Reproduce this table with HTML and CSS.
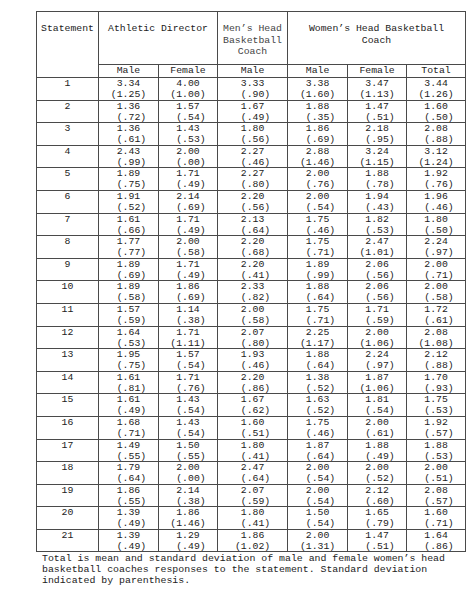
FILE: index.html
```html
<!DOCTYPE html>
<html>
<head>
<meta charset="utf-8">
<link rel="stylesheet" href="styles.css">
</head>
<body>
<div class="page">
<table class="stats">
<colgroup>
<col class="c-st"><col class="c-60"><col class="c-59"><col class="c-70"><col class="c-60"><col class="c-59"><col class="c-59">
</colgroup>
<thead>
<tr class="head">
<th rowspan="2" class="st-head">Statement</th>
<th colspan="2">Athletic Director</th>
<th class="mens">Men’s Head Basketball Coach</th>
<th colspan="3">Women’s Head Basketball<br>Coach</th>
</tr>
<tr class="sub">
<th>Male</th><th>Female</th><th>Male</th><th>Male</th><th>Female</th><th>Total</th>
</tr>
</thead>
<tbody>
<tr><td>1</td><td>3.34<span class="sd">(1.25)</span></td><td>4.00<span class="sd">(1.00)</span></td><td>3.33<span class="sd"> (.90)</span></td><td>3.38<span class="sd">(1.60)</span></td><td>3.47<span class="sd">(1.13)</span></td><td>3.44<span class="sd">(1.26)</span></td></tr>
<tr><td>2</td><td>1.36<span class="sd"> (.72)</span></td><td>1.57<span class="sd"> (.54)</span></td><td>1.67<span class="sd"> (.49)</span></td><td>1.88<span class="sd"> (.35)</span></td><td>1.47<span class="sd"> (.51)</span></td><td>1.60<span class="sd"> (.50)</span></td></tr>
<tr><td>3</td><td>1.36<span class="sd"> (.61)</span></td><td>1.43<span class="sd"> (.53)</span></td><td>1.80<span class="sd"> (.56)</span></td><td>1.86<span class="sd"> (.69)</span></td><td>2.18<span class="sd"> (.95)</span></td><td>2.08<span class="sd"> (.88)</span></td></tr>
<tr><td>4</td><td>2.43<span class="sd"> (.99)</span></td><td>2.00<span class="sd"> (.00)</span></td><td>2.27<span class="sd"> (.46)</span></td><td>2.88<span class="sd">(1.46)</span></td><td>3.24<span class="sd">(1.15)</span></td><td>3.12<span class="sd">(1.24)</span></td></tr>
<tr><td>5</td><td>1.89<span class="sd"> (.75)</span></td><td>1.71<span class="sd"> (.49)</span></td><td>2.27<span class="sd"> (.80)</span></td><td>2.00<span class="sd"> (.76)</span></td><td>1.88<span class="sd"> (.78)</span></td><td>1.92<span class="sd"> (.76)</span></td></tr>
<tr><td>6</td><td>1.91<span class="sd"> (.52)</span></td><td>2.14<span class="sd"> (.69)</span></td><td>2.20<span class="sd"> (.56)</span></td><td>2.00<span class="sd"> (.54)</span></td><td>1.94<span class="sd"> (.43)</span></td><td>1.96<span class="sd"> (.46)</span></td></tr>
<tr><td>7</td><td>1.61<span class="sd"> (.66)</span></td><td>1.71<span class="sd"> (.49)</span></td><td>2.13<span class="sd"> (.64)</span></td><td>1.75<span class="sd"> (.46)</span></td><td>1.82<span class="sd"> (.53)</span></td><td>1.80<span class="sd"> (.50)</span></td></tr>
<tr><td>8</td><td>1.77<span class="sd"> (.77)</span></td><td>2.00<span class="sd"> (.58)</span></td><td>2.20<span class="sd"> (.68)</span></td><td>1.75<span class="sd"> (.71)</span></td><td>2.47<span class="sd">(1.01)</span></td><td>2.24<span class="sd"> (.97)</span></td></tr>
<tr><td>9</td><td>1.89<span class="sd"> (.69)</span></td><td>1.71<span class="sd"> (.49)</span></td><td>2.20<span class="sd"> (.41)</span></td><td>1.89<span class="sd"> (.99)</span></td><td>2.06<span class="sd"> (.56)</span></td><td>2.00<span class="sd"> (.71)</span></td></tr>
<tr><td>10</td><td>1.89<span class="sd"> (.58)</span></td><td>1.86<span class="sd"> (.69)</span></td><td>2.33<span class="sd"> (.82)</span></td><td>1.88<span class="sd"> (.64)</span></td><td>2.06<span class="sd"> (.56)</span></td><td>2.00<span class="sd"> (.58)</span></td></tr>
<tr><td>11</td><td>1.57<span class="sd"> (.59)</span></td><td>1.14<span class="sd"> (.38)</span></td><td>2.00<span class="sd"> (.58)</span></td><td>1.75<span class="sd"> (.71)</span></td><td>1.71<span class="sd"> (.59)</span></td><td>1.72<span class="sd"> (.61)</span></td></tr>
<tr><td>12</td><td>1.64<span class="sd"> (.53)</span></td><td>1.71<span class="sd">(1.11)</span></td><td>2.07<span class="sd"> (.80)</span></td><td>2.25<span class="sd">(1.17)</span></td><td>2.00<span class="sd">(1.06)</span></td><td>2.08<span class="sd">(1.08)</span></td></tr>
<tr><td>13</td><td>1.95<span class="sd"> (.75)</span></td><td>1.57<span class="sd"> (.54)</span></td><td>1.93<span class="sd"> (.46)</span></td><td>1.88<span class="sd"> (.64)</span></td><td>2.24<span class="sd"> (.97)</span></td><td>2.12<span class="sd"> (.88)</span></td></tr>
<tr><td>14</td><td>1.61<span class="sd"> (.81)</span></td><td>1.71<span class="sd"> (.76)</span></td><td>2.20<span class="sd"> (.86)</span></td><td>1.38<span class="sd"> (.52)</span></td><td>1.87<span class="sd">(1.06)</span></td><td>1.70<span class="sd"> (.93)</span></td></tr>
<tr><td>15</td><td>1.61<span class="sd"> (.49)</span></td><td>1.43<span class="sd"> (.54)</span></td><td>1.67<span class="sd"> (.62)</span></td><td>1.63<span class="sd"> (.52)</span></td><td>1.81<span class="sd"> (.54)</span></td><td>1.75<span class="sd"> (.53)</span></td></tr>
<tr><td>16</td><td>1.68<span class="sd"> (.71)</span></td><td>1.43<span class="sd"> (.54)</span></td><td>1.60<span class="sd"> (.51)</span></td><td>1.75<span class="sd"> (.46)</span></td><td>2.00<span class="sd"> (.61)</span></td><td>1.92<span class="sd"> (.57)</span></td></tr>
<tr><td>17</td><td>1.49<span class="sd"> (.55)</span></td><td>1.50<span class="sd"> (.55)</span></td><td>1.80<span class="sd"> (.41)</span></td><td>1.87<span class="sd"> (.64)</span></td><td>1.88<span class="sd"> (.49)</span></td><td>1.88<span class="sd"> (.53)</span></td></tr>
<tr><td>18</td><td>1.79<span class="sd"> (.64)</span></td><td>2.00<span class="sd"> (.00)</span></td><td>2.47<span class="sd"> (.64)</span></td><td>2.00<span class="sd"> (.54)</span></td><td>2.00<span class="sd"> (.52)</span></td><td>2.00<span class="sd"> (.51)</span></td></tr>
<tr><td>19</td><td>1.86<span class="sd"> (.55)</span></td><td>2.14<span class="sd"> (.38)</span></td><td>2.07<span class="sd"> (.59)</span></td><td>2.00<span class="sd"> (.54)</span></td><td>2.12<span class="sd"> (.60)</span></td><td>2.08<span class="sd"> (.57)</span></td></tr>
<tr><td>20</td><td>1.39<span class="sd"> (.49)</span></td><td>1.86<span class="sd">(1.46)</span></td><td>1.80<span class="sd"> (.41)</span></td><td>1.50<span class="sd"> (.54)</span></td><td>1.65<span class="sd"> (.79)</span></td><td>1.60<span class="sd"> (.71)</span></td></tr>
<tr><td>21</td><td>1.39<span class="sd"> (.49)</span></td><td>1.29<span class="sd"> (.49)</span></td><td>1.86<span class="sd">(1.02)</span></td><td>2.00<span class="sd">(1.31)</span></td><td>1.47<span class="sd"> (.51)</span></td><td>1.64<span class="sd"> (.86)</span></td></tr>
</tbody>
</table>
<p class="note">Total is mean and standard deviation of male and female women’s head<br>basketball coaches responses to the statement. Standard deviation<br>indicated by parenthesis.</p>
</div>
</body>
</html>
```
FILE: styles.css
```css
html, body {
  margin: 0;
  padding: 0;
  background: #ffffff;
}
.page {
  padding: 11px 0 0 36px;
  font-family: "Liberation Mono", "DejaVu Sans Mono", monospace;
  font-size: 9.8px;
  color: #222222;
}
.stats {
  border-collapse: collapse;
  table-layout: fixed;
  width: 430px;
}
.c-st { width: 62px; }
.c-60 { width: 60px; }
.c-59 { width: 59px; }
.c-70 { width: 70px; }
.stats th,
.stats td {
  border: 1px solid #4a4a4a;
  padding: 0;
  text-align: center;
  font-weight: normal;
}
.head th {
  height: 53px;
  vertical-align: top;
  padding-top: 11px;
  line-height: 11.5px;
  box-sizing: border-box;
}
.head th.mens {
  padding-left: 5px;
  padding-right: 5px;
  color: #444;
}
.sub th {
  height: 12px;
  line-height: 12px;
  padding-top: 0;
  vertical-align: middle;
  box-sizing: border-box;
}
.stats td {
  white-space: pre;
  vertical-align: top;
  line-height: 12px;
  height: 21.6px;
  box-sizing: border-box;
}
.sd {
  display: block;
  line-height: 9.6px;
}
.note {
  margin: 0;
  padding: 2px 0 0 6px;
  line-height: 10.6px;
  font-size: 9.9px;
  color: #222222;
}
```
